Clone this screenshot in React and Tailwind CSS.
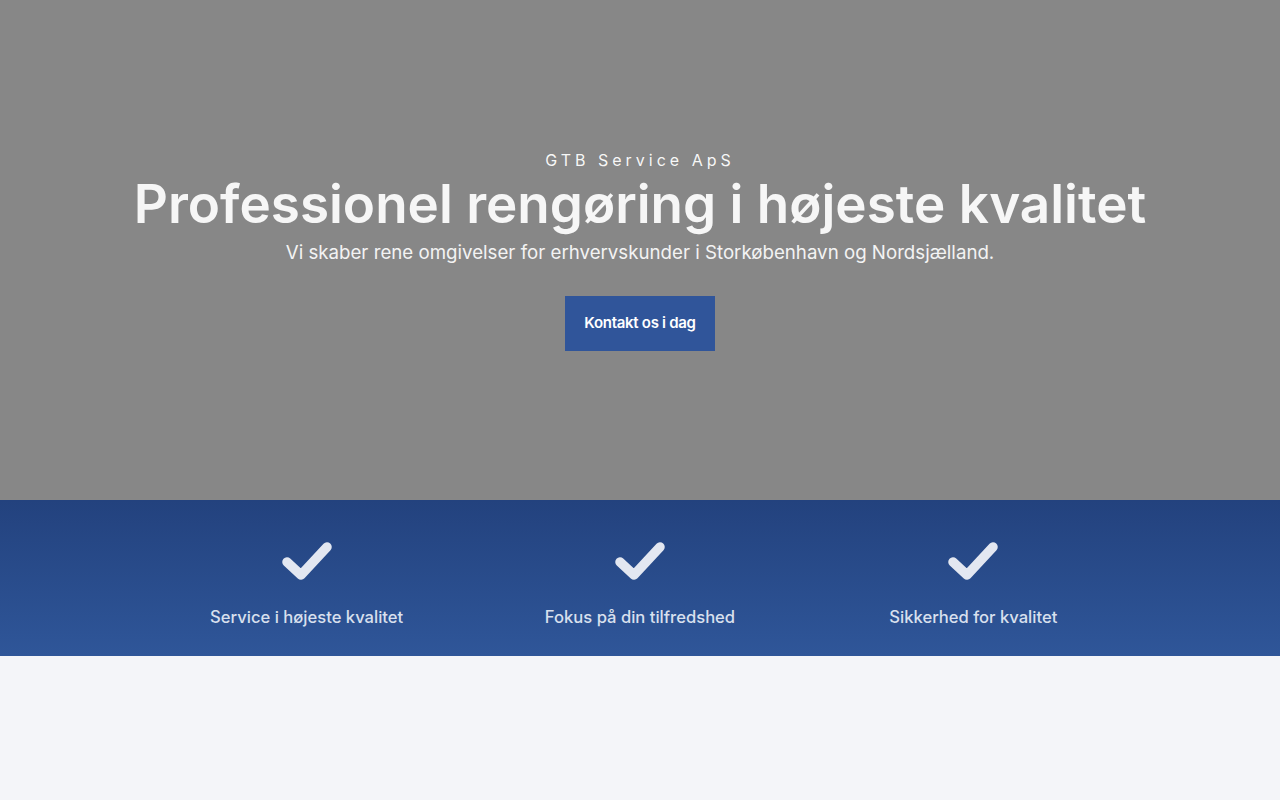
import React from "react";

const features = [
  "Service i højeste kvalitet",
  "Fokus på din tilfredshed",
  "Sikkerhed for kvalitet",
];

function Check() {
  return (
    <svg width="50" height="40" viewBox="0 0 50 40" className="text-[#e3e7f1]">
      <polyline
        points="5,21 19,34 45,6"
        fill="none"
        stroke="currentColor"
        strokeWidth="9.5"
        strokeLinecap="round"
        strokeLinejoin="round"
      />
    </svg>
  );
}

export default function App() {
  return (
    <div className="min-h-screen bg-[#f4f5f9] font-['Inter',sans-serif]">
      {/* Hero */}
      <section className="h-[500px] bg-[#878787] flex flex-col items-center justify-center text-center text-white">
        <p className="text-[16px] tracking-[4px] font-normal leading-5 text-white/95">GTB Service ApS</p>
        <h1 className="mt-[4px] text-[53px] font-semibold tracking-[0px] leading-[60px] text-[#f6f6f6]">
          Professionel rengøring i højeste kvalitet
        </h1>
        <p className="mt-[5px] text-[18.7px] leading-7 text-[#f3f3f3]">
          Vi skaber rene omgivelser for erhvervskunder i Storkøbenhavn og Nordsjælland.
        </p>
        <a
          href="#"
          className="mt-[29px] w-[150px] h-[55px] flex items-center justify-center bg-[#30559a] text-white text-[15px] font-semibold tracking-[-0.3px]"
        >
          Kontakt os i dag
        </a>
      </section>

      {/* Features */}
      <section className="h-[156px] bg-gradient-to-b from-[#23427e] to-[#2f5699]">
        <div className="mx-auto w-[1000px] grid grid-cols-3 pt-[41px]">
          {features.map((f) => (
            <div key={f} className="flex flex-col items-center">
              <Check />
              <p className="mt-[24px] text-[16.6px] font-medium text-[#d9e0ee]">{f}</p>
            </div>
          ))}
        </div>
      </section>
    </div>
  );
}
